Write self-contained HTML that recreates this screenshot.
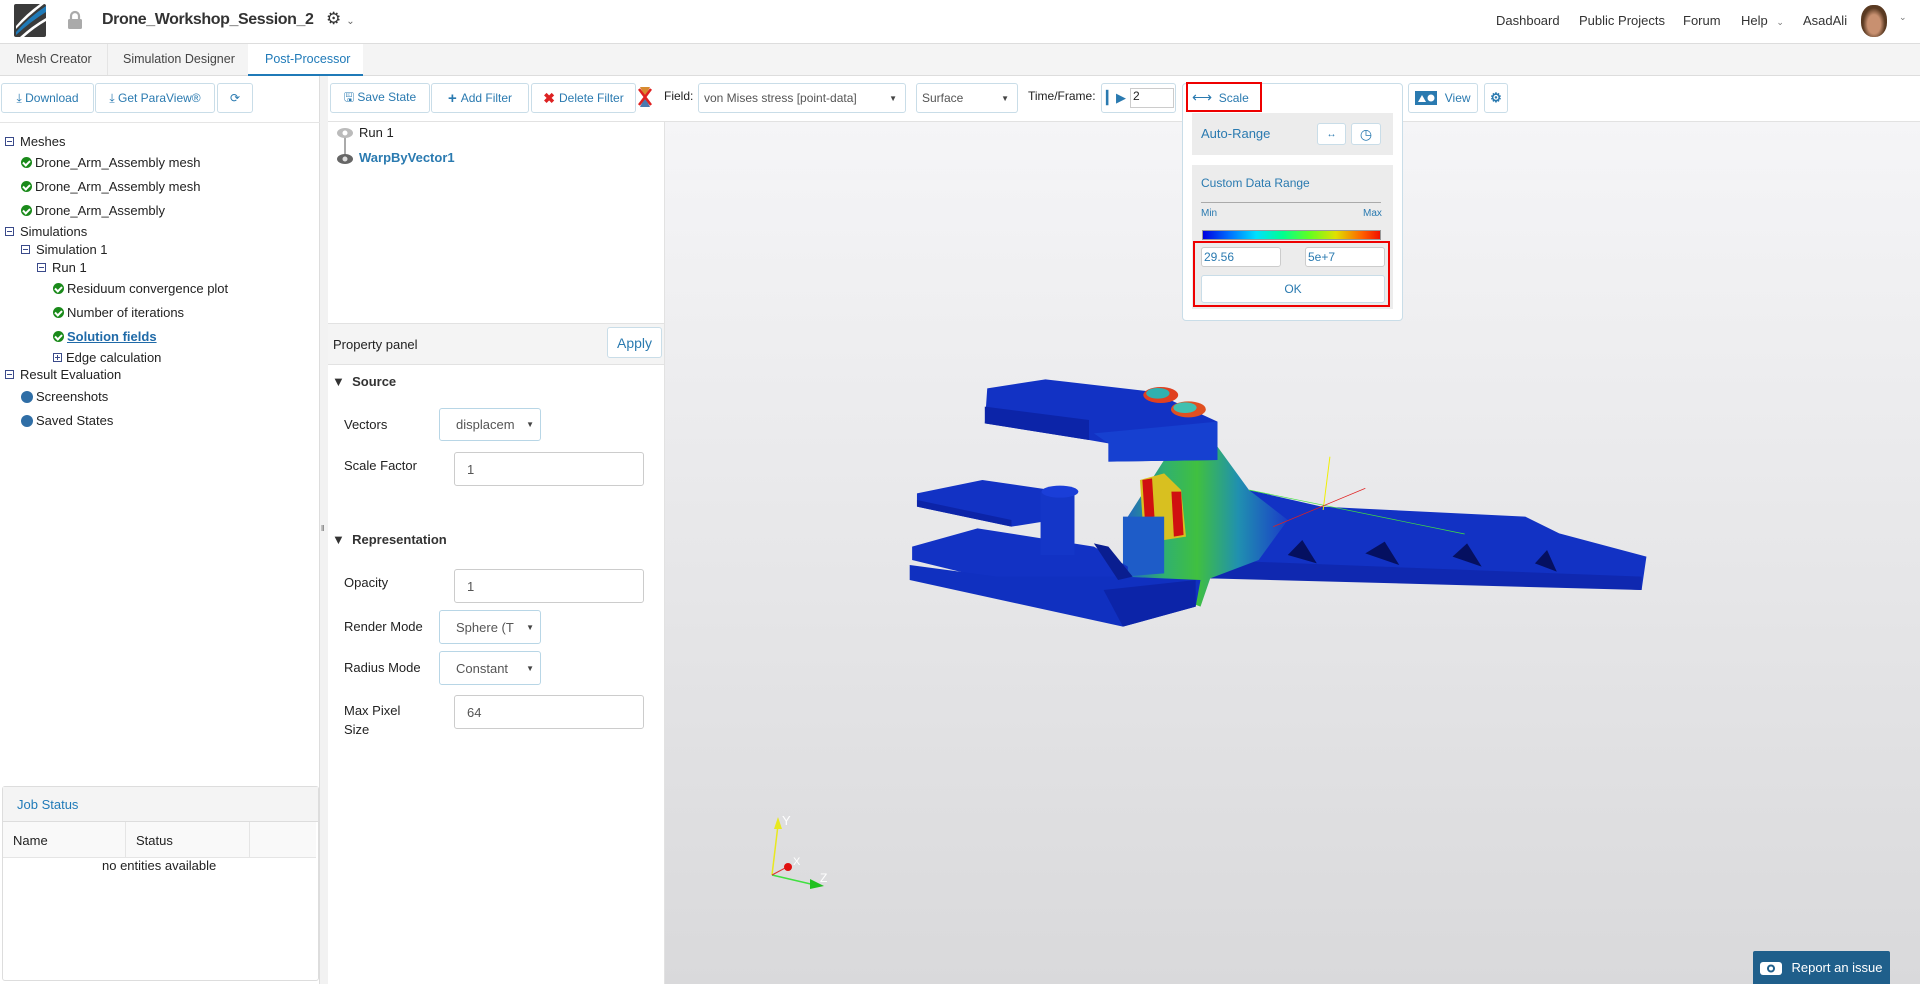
<!DOCTYPE html>
<html><head><meta charset="utf-8"><style>
*{box-sizing:border-box;margin:0;padding:0}
body{width:1920px;height:984px;overflow:hidden;font-family:"Liberation Sans",sans-serif;background:#fff;position:relative;color:#222}
.a{position:absolute}
.btn{position:absolute;border:1px solid #c9dde8;border-radius:3px;background:#fff;color:#2a7ab0;font-size:12px;display:flex;align-items:center;justify-content:center;gap:4px}
.tree div{position:absolute;font-size:13px;color:#222;white-space:nowrap;display:flex;align-items:center;gap:3px}
.ck{width:11px;height:11px;border-radius:50%;background:#1a8a1a;display:inline-block;position:relative}
.ck:after{content:"";position:absolute;left:3px;top:2px;width:3px;height:5px;border:solid #fff;border-width:0 2px 2px 0;transform:rotate(45deg)}
.mn{width:9px;height:9px;border:1px solid #3a4a8a;display:inline-block;position:relative;margin-right:3px}
.mn:after{content:"";position:absolute;left:1px;top:3px;width:5px;height:1px;background:#3a4a8a}
.pl:before{content:"";position:absolute;left:3px;top:1px;width:1px;height:5px;background:#3a4a8a}
.dot{width:12px;height:12px;border-radius:50%;background:#2f6ea6;display:inline-block}
.lbl{position:absolute;font-size:13px;color:#222}
.inp{position:absolute;border:1px solid #ccc;border-radius:3px;background:#fff;font-size:13px;color:#555;padding-left:12px;display:flex;align-items:center}
.sel{position:absolute;border:1px solid #b8d6e6;border-radius:3px;background:#fff;font-size:13px;color:#555;padding-left:16px;display:flex;align-items:center}
.sel:after{content:"▼";position:absolute;right:6px;font-size:8px;color:#444}
.tsel{position:absolute;border:1px solid #c9dde8;border-radius:3px;background:#fff;font-size:13px;color:#555;padding-left:5px;display:flex;align-items:center}
.tsel:after{content:"▼";position:absolute;right:8px;font-size:8px;color:#444}
</style></head><body>
<!-- header -->
<div class="a" style="left:0;top:0;width:1920px;height:44px;border-bottom:1px solid #ddd;background:#fff"></div>
<svg class="a" style="left:14px;top:4px" width="32" height="33" viewBox="0 0 32 33"><rect width="32" height="33" rx="2" fill="#3b3b3b"/><path d="M2 28 Q14 14 32 2 L32 8 Q16 18 2 31Z" fill="#1f7ab8"/><path d="M2 22 Q12 10 26 0 L30 0 Q14 12 2 25Z" fill="#fff"/><path d="M6 33 Q18 22 32 14 L32 17 Q20 24 10 33Z" fill="#fff"/></svg>
<svg class="a" style="left:67px;top:10px" width="16" height="20" viewBox="0 0 16 20"><path d="M4 9V6a4 4 0 0 1 8 0v3" stroke="#aaa" stroke-width="2.2" fill="none"/><rect x="1" y="9" width="14" height="10" rx="1.5" fill="#aaa"/></svg>
<div class="a" style="left:102px;top:11px;font-size:16px;font-weight:bold;color:#333;letter-spacing:-0.4px">Drone_Workshop_Session_2</div>
<div class="a" style="left:326px;top:9px;font-size:17px;color:#333">⚙<span style="font-size:10px;color:#666;margin-left:5px">⌄</span></div>
<div class="a" style="left:1496px;top:13px;font-size:13px;color:#333">Dashboard</div>
<div class="a" style="left:1579px;top:13px;font-size:13px;color:#333">Public Projects</div>
<div class="a" style="left:1683px;top:13px;font-size:13px;color:#333">Forum</div>
<div class="a" style="left:1741px;top:13px;font-size:13px;color:#333">Help <span style="font-size:9px;color:#777;margin-left:5px">⌄</span></div>
<div class="a" style="left:1803px;top:13px;font-size:13px;color:#333">AsadAli</div>
<div class="a" style="left:1861px;top:5px;width:26px;height:32px;border-radius:45%;background:radial-gradient(ellipse at 50% 60%,#c89070 35%,#5a3a22 60%)"></div>
<div class="a" style="left:1899px;top:12px;font-size:9px;color:#777">⌄</div>
<!-- tabs -->
<div class="a" style="left:0;top:44px;width:1920px;height:32px;background:#f4f4f4;border-bottom:1px solid #ddd"></div>
<div class="a" style="left:16px;top:52px;font-size:12.5px;color:#444">Mesh Creator</div>
<div class="a" style="left:107px;top:44px;width:1px;height:31px;background:#e4e4e4"></div>
<div class="a" style="left:123px;top:52px;font-size:12.5px;color:#444">Simulation Designer</div>
<div class="a" style="left:248px;top:44px;width:115px;height:32px;background:#fff;border-bottom:2px solid #1f7ab8"></div>
<div class="a" style="left:265px;top:52px;font-size:12.5px;color:#1f7ab8">Post-Processor</div>
<!-- left panel -->
<div class="a" style="left:0;top:76px;width:320px;height:908px;border-right:1px solid #ddd;background:#fff"></div>
<div class="a" style="left:320px;top:76px;width:8px;height:908px;background:#f2f2f2"></div>
<div class="a" style="left:321px;top:524px;font-size:8px;color:#555">‖</div>
<div class="btn" style="left:1px;top:83px;width:93px;height:30px">⤓ Download</div>
<div class="btn" style="left:95px;top:83px;width:120px;height:30px">⤓ Get ParaView®</div>
<div class="btn" style="left:217px;top:83px;width:36px;height:30px">⟳</div>
<div class="a" style="left:0;top:122px;width:320px;height:1px;background:#e5e5e5"></div>
<div class="tree">
<div style="left:5px;top:134px"><span class="mn"></span>Meshes</div>
<div style="left:21px;top:155px"><span class="ck"></span>Drone_Arm_Assembly mesh</div>
<div style="left:21px;top:179px"><span class="ck"></span>Drone_Arm_Assembly mesh</div>
<div style="left:21px;top:203px"><span class="ck"></span>Drone_Arm_Assembly</div>
<div style="left:5px;top:224px"><span class="mn"></span>Simulations</div>
<div style="left:21px;top:242px"><span class="mn"></span>Simulation 1</div>
<div style="left:37px;top:260px"><span class="mn"></span>Run 1</div>
<div style="left:53px;top:281px"><span class="ck"></span>Residuum convergence plot</div>
<div style="left:53px;top:305px"><span class="ck"></span>Number of iterations</div>
<div style="left:53px;top:329px"><span class="ck"></span><span style="color:#1f6aa8;font-weight:bold;text-decoration:underline">Solution fields</span></div>
<div style="left:53px;top:350px"><span class="mn pl" style="margin-right:1px"></span>Edge calculation</div>
<div style="left:5px;top:367px"><span class="mn"></span>Result Evaluation</div>
<div style="left:21px;top:389px"><span class="dot"></span>Screenshots</div>
<div style="left:21px;top:413px"><span class="dot"></span>Saved States</div>
</div>
<!-- job status -->
<div class="a" style="left:2px;top:786px;width:317px;height:195px;border:1px solid #ddd;border-radius:3px;background:#fff"></div>
<div class="a" style="left:3px;top:787px;width:315px;height:35px;background:#f4f4f4;border-bottom:1px solid #ddd"></div>
<div class="a" style="left:17px;top:797px;font-size:13px;color:#1f7ab8">Job Status</div>
<div class="a" style="left:3px;top:822px;width:313px;height:36px;background:#f9f9f9;border-bottom:1px solid #e5e5e5"></div>
<div class="a" style="left:125px;top:822px;width:1px;height:36px;background:#e5e5e5"></div>
<div class="a" style="left:249px;top:822px;width:1px;height:36px;background:#e5e5e5"></div>
<div class="a" style="left:13px;top:833px;font-size:13px">Name</div>
<div class="a" style="left:136px;top:833px;font-size:13px">Status</div>
<div class="a" style="left:102px;top:858px;font-size:13px">no entities available</div>
<!-- middle panel -->
<div class="a" style="left:328px;top:76px;width:1592px;height:908px;background:#fff"></div>
<div class="a" style="left:328px;top:121px;width:1592px;height:1px;background:#e2e2e2"></div>
<div class="btn" style="left:330px;top:83px;width:100px;height:30px">🖫 Save State</div>
<div class="btn" style="left:431px;top:83px;width:98px;height:30px"><b style="font-size:15px">+</b> Add Filter</div>
<div class="btn" style="left:531px;top:83px;width:105px;height:30px"><b style="color:#d22;font-size:14px">✖</b> Delete Filter</div>
<svg class="a" style="left:638px;top:87px" width="14" height="20" viewBox="0 0 14 20"><path d="M2 0h10l-5 10z" fill="#d88a30"/><path d="M2 20h10l-5-10z" fill="#4a7ab0"/><path d="M1 2l12 16M13 2L1 18" stroke="#e02020" stroke-width="2.5"/></svg>
<div class="a" style="left:664px;top:122px;width:1px;height:862px;background:#e2e2e2"></div>
<!-- pipeline -->
<svg class="a" style="left:336px;top:124px" width="18" height="44" viewBox="0 0 18 44"><line x1="9" y1="10" x2="9" y2="34" stroke="#aaa" stroke-width="2"/><ellipse cx="9" cy="9" rx="8" ry="5" fill="#bbb"/><circle cx="9" cy="9" r="2.5" fill="#fff"/><ellipse cx="9" cy="35" rx="8" ry="5" fill="#666"/><circle cx="9" cy="35" r="2.5" fill="#ddd"/></svg>
<div class="a" style="left:359px;top:125px;font-size:13px">Run 1</div>
<div class="a" style="left:359px;top:150px;font-size:13px;font-weight:bold;color:#2a7ab0">WarpByVector1</div>
<div class="a" style="left:328px;top:323px;width:336px;height:42px;background:#f4f4f4;border-top:1px solid #e2e2e2;border-bottom:1px solid #e2e2e2"></div>
<div class="a" style="left:333px;top:337px;font-size:13px">Property panel</div>
<div class="btn" style="left:607px;top:327px;width:55px;height:31px;font-size:14px">Apply</div>
<div class="a" style="left:332px;top:374px;font-size:13px;font-weight:bold;color:#333">▼&nbsp; Source</div>
<div class="lbl" style="left:344px;top:417px">Vectors</div>
<div class="sel" style="left:439px;top:408px;width:102px;height:33px">displacem</div>
<div class="lbl" style="left:344px;top:458px">Scale Factor</div>
<div class="inp" style="left:454px;top:452px;width:190px;height:34px">1</div>
<div class="a" style="left:332px;top:532px;font-size:13px;font-weight:bold;color:#333">▼&nbsp; Representation</div>
<div class="lbl" style="left:344px;top:575px">Opacity</div>
<div class="inp" style="left:454px;top:569px;width:190px;height:34px">1</div>
<div class="lbl" style="left:344px;top:619px">Render Mode</div>
<div class="sel" style="left:439px;top:610px;width:102px;height:34px">Sphere (T</div>
<div class="lbl" style="left:344px;top:660px">Radius Mode</div>
<div class="sel" style="left:439px;top:651px;width:102px;height:34px">Constant</div>
<div class="lbl" style="left:344px;top:701px;line-height:19px">Max Pixel<br>Size</div>
<div class="inp" style="left:454px;top:695px;width:190px;height:34px">64</div>
<!-- viewport -->
<div class="a" style="left:665px;top:122px;width:1255px;height:862px;background:linear-gradient(#f5f5f7,#d9d9db)"></div>
<div class="a" style="left:664px;top:89px;font-size:12px">Field:</div>
<div class="tsel" style="left:698px;top:83px;width:208px;height:30px;font-size:12px">von Mises stress [point-data]</div>
<div class="tsel" style="left:916px;top:83px;width:102px;height:30px;font-size:12px">Surface</div>
<div class="a" style="left:1028px;top:89px;font-size:12px">Time/Frame:</div>
<div class="btn" style="left:1101px;top:83px;width:75px;height:30px;justify-content:flex-start;padding-left:4px"><span style="color:#2a7ab0;font-size:13px">▎▶</span><span style="border:1px solid #ccc;width:44px;height:20px;color:#222;font-size:12px;padding-left:2px">2</span></div>
<!-- scale dropdown -->
<div class="a" style="left:1182px;top:83px;width:221px;height:238px;border:1px solid #c9dde8;border-radius:4px;background:#fff"></div>
<div class="a" style="left:1186px;top:82px;width:76px;height:30px;border:2px solid #e00"></div>
<div class="a" style="left:1192px;top:89px;font-size:12px;color:#2a7ab0"><span style="font-size:14px">⟷</span>&nbsp; Scale</div>
<div class="a" style="left:1192px;top:113px;width:201px;height:42px;background:#ececec"></div>
<div class="a" style="left:1201px;top:126px;font-size:13px;color:#2a7ab0">Auto-Range</div>
<div class="btn" style="left:1317px;top:123px;width:29px;height:22px;font-size:10px">↔</div>
<div class="btn" style="left:1351px;top:123px;width:30px;height:22px;font-size:14px">◷</div>
<div class="a" style="left:1192px;top:165px;width:201px;height:144px;background:#ececec"></div>
<div class="a" style="left:1201px;top:176px;font-size:12px;color:#2a7ab0">Custom Data Range</div>
<div class="a" style="left:1201px;top:202px;width:180px;height:1px;background:#aaa"></div>
<div class="a" style="left:1201px;top:208px;font-size:10px;color:#2a7ab0">Min</div>
<div class="a" style="left:1363px;top:208px;font-size:10px;color:#2a7ab0">Max</div>
<div class="a" style="left:1202px;top:230px;width:179px;height:10px;border:1px solid #999;background:linear-gradient(90deg,#0000e0,#0070ff 15%,#00e0ff 30%,#00ff90 45%,#60ff20 60%,#e0e000 75%,#ff6000 90%,#f01000)"></div>
<div class="a" style="left:1193px;top:241px;width:197px;height:66px;border:2px solid #e00"></div>
<div class="inp" style="left:1201px;top:247px;width:80px;height:20px;padding-left:2px;color:#2a7ab0;font-size:12px">29.56</div>
<div class="inp" style="left:1305px;top:247px;width:80px;height:20px;padding-left:2px;color:#2a7ab0;font-size:12px">5e+7</div>
<div class="btn" style="left:1201px;top:275px;width:184px;height:28px;font-size:12px">OK</div>
<div class="btn" style="left:1408px;top:83px;width:70px;height:30px"><svg width="22" height="14"><rect width="22" height="14" fill="#2a7ab0"/><path d="M3 11l4-7 4 7z" fill="#fff"/><circle cx="16" cy="7" r="3.5" fill="#fff"/></svg>&nbsp;View</div>
<div class="btn" style="left:1484px;top:83px;width:24px;height:30px;font-size:13px;font-weight:bold">⚙</div>
<!-- model -->
<svg class="a" style="left:900px;top:360px" width="760" height="280" viewBox="0 0 1568 840" preserveAspectRatio="none">
<defs><linearGradient id="g1" x1="0" x2="1"><stop offset="0" stop-color="#1f60c8"/><stop offset=".25" stop-color="#30b070"/><stop offset=".45" stop-color="#40c040"/><stop offset=".7" stop-color="#2090b0"/><stop offset="1" stop-color="#1a3cc8"/></linearGradient></defs>
<polygon points="620,430 720,390 870,440 1290,470 1360,520 1540,590 1530,690 1100,660 640,655" fill="#1232c4"/>
<polygon points="640,600 1530,650 1530,690 640,655" fill="#0f28b0"/>
<polygon points="800,585 830,540 860,610" fill="#051060"/><polygon points="960,580 1000,545 1030,615" fill="#051060"/>
<polygon points="1140,590 1170,550 1200,620" fill="#051060"/><polygon points="1310,610 1335,570 1355,635" fill="#051060"/>
<polygon points="690,515 720,505 710,530" fill="#fff"/>
<polygon points="470,470 545,300 650,250 720,390 800,480 740,600 640,655 620,740 460,650" fill="url(#g1)"/>
<polygon points="495,360 545,340 580,390 590,530 545,540 500,470" fill="#d8c020"/>
<polygon points="500,360 520,355 525,470 505,475" fill="#d01010"/>
<polygon points="560,395 580,395 585,525 565,530" fill="#d01010"/>
<polygon points="460,470 545,470 545,640 460,650" fill="#1e5cc8"/>
<polygon points="180,85 300,58 520,95 655,185 655,300 430,305 430,250 390,240 175,190" fill="#1232c4"/>
<polygon points="175,140 390,180 390,240 175,190" fill="#0c24a8"/>
<polygon points="400,220 655,185 655,300 430,305 430,250" fill="#1640d0"/>
<ellipse cx="538" cy="105" rx="36" ry="24" fill="#e04020"/><ellipse cx="532" cy="100" rx="24" ry="16" fill="#30b0b0"/>
<ellipse cx="595" cy="148" rx="36" ry="24" fill="#e05020"/><ellipse cx="588" cy="143" rx="24" ry="16" fill="#40c0b0"/>
<polygon points="35,400 170,360 360,400 360,470 230,500 35,440" fill="#1232c4"/>
<polygon points="35,420 230,480 230,500 35,440" fill="#0c24a8"/>
<polygon points="25,560 160,505 400,560 470,620 470,650 250,680 25,600" fill="#1232c4"/>
<polygon points="20,615 200,650 460,650 620,660 610,740 460,800 20,660" fill="#1030c0"/>
<polygon points="420,690 610,660 610,740 460,800" fill="#0c24a8"/>
<rect x="290" y="395" width="70" height="190" fill="#1436c8"/>
<ellipse cx="330" cy="395" rx="38" ry="18" fill="#1a3ed8"/>
<polygon points="400,550 430,560 480,650 450,660" fill="#0a1e90"/>
<line x1="887" y1="290" x2="873" y2="450" stroke="#f0f000" stroke-width="2"/>
<line x1="720" y1="390" x2="1165" y2="522" stroke="#40e040" stroke-width="2"/>
<line x1="770" y1="500" x2="960" y2="385" stroke="#e02020" stroke-width="2"/>
</svg>
<!-- axes widget -->
<svg class="a" style="left:760px;top:805px" width="80" height="90" viewBox="0 0 80 90"><line x1="12" y1="70" x2="18" y2="20" stroke="#e8e820" stroke-width="1.5"/><path d="M14 24l4-12 4 12z" fill="#e8e820"/><line x1="12" y1="70" x2="55" y2="80" stroke="#40e040" stroke-width="1.5"/><path d="M50 74l14 7-14 3z" fill="#20c020"/><line x1="12" y1="70" x2="27" y2="62" stroke="#e03030"/><circle cx="28" cy="62" r="4" fill="#e01010"/><text x="22" y="20" fill="#fff" font-size="13" font-family="Liberation Sans">Y</text><text x="33" y="60" fill="#fff" font-size="11" font-family="Liberation Sans">X</text><text x="60" y="77" fill="#fff" font-size="12" font-family="Liberation Sans">Z</text></svg>
<!-- report -->
<div class="a" style="left:1753px;top:951px;width:137px;height:33px;background:#1f5f8b;color:#fff;font-size:13px;display:flex;align-items:center;justify-content:center;gap:9px;border-radius:2px 2px 0 0"><svg width="22" height="15"><rect x="0" y="2" width="22" height="13" rx="3" fill="#fff"/><circle cx="11" cy="8.5" r="4" fill="#1f5f8b"/><circle cx="11" cy="8.5" r="2" fill="#fff"/></svg>Report an issue</div>
</body></html>
